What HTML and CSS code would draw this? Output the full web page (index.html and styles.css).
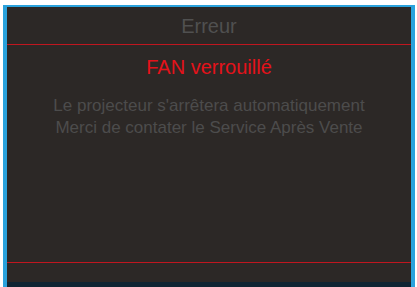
FILE: index.html
```html
<!DOCTYPE html>
<html lang="fr">
<head>
<meta charset="utf-8">
<link rel="stylesheet" href="styles.css">
</head>
<body>
<div class="frame">
  <div class="panel">
    <div class="title">Erreur</div>
    <div class="rule"></div>
    <div class="content">
      <div class="alert">FAN verrouillé</div>
      <div class="message">
        <p>Le projecteur s'arrêtera automatiquement</p>
        <p>Merci de contater le Service Après Vente</p>
      </div>
    </div>
    <div class="rule"></div>
    <div class="foot"></div>
  </div>
  <div class="strip"></div>
</div>
</body>
</html>
```
FILE: styles.css
```css
html, body {
  margin: 0;
  padding: 0;
  background: #ffffff;
  width: 417px;
  height: 287px;
  overflow: hidden;
  font-family: "Liberation Sans", Arial, sans-serif;
}
.frame {
  margin: 5px 2px 0 3px;
  height: 282px;
  border-left: 4px solid #2aa2dc;
  border-right: 4px solid #2aa2dc;
  border-top: 2px solid #2aa2dc;
  box-sizing: border-box;
  display: flex;
  flex-direction: column;
  background: #2c2826;
}
.panel {
  flex: 1;
  display: flex;
  flex-direction: column;
}
.title {
  height: 37px;
  display: flex;
  align-items: center;
  justify-content: center;
  font-size: 20px;
  color: #505050;
  padding-top: 1px;
  box-sizing: border-box;
}
.rule {
  height: 1px;
  background: #c0161f;
}
.content {
  flex: 1;
  display: flex;
  flex-direction: column;
  align-items: center;
}
.alert {
  color: #e4121a;
  font-size: 20px;
  margin-top: 10px;
  line-height: 24px;
}
.message {
  margin-top: 16px;
  color: #4c4c4c;
  font-size: 17px;
  text-align: center;
}
.message p {
  margin: 0;
  line-height: 22px;
}
.foot {
  height: 19px;
}
.strip {
  height: 5px;
  background: #0f2533;
}
```
